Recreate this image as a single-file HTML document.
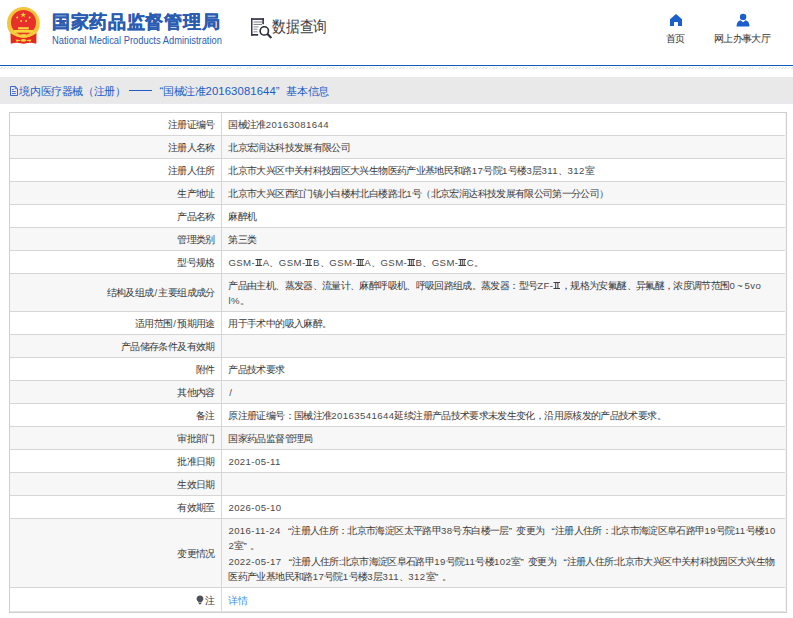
<!DOCTYPE html>
<html><head><meta charset="utf-8">
<style>
html,body{margin:0;padding:0;}
body{width:793px;height:618px;overflow:hidden;background:#fff;position:relative;font-family:"Liberation Sans",sans-serif;color:#333;}
.abs{position:absolute;}
.t1{left:52px;top:9.6px;font-size:17.8px;letter-spacing:0.7px;line-height:24px;font-weight:bold;color:#2a5cb2;-webkit-text-stroke:0.35px #2a5cb2;white-space:nowrap;}
.t2{left:52px;top:35px;font-size:10px;line-height:11px;color:#2c5db2;transform:scaleX(0.935);transform-origin:0 0;white-space:nowrap;}
.q{left:271.5px;top:17px;font-size:16px;line-height:20px;transform:scaleX(0.86);transform-origin:0 0;color:#3c3c44;white-space:nowrap;}
.nav{font-size:10.2px;letter-spacing:-0.64px;line-height:11px;color:#333;white-space:nowrap;}
.bline{left:0;top:65px;width:793px;height:1px;background:#0c5cc3;}
.dash{left:0;top:67px;width:793px;height:2px;background:repeating-linear-gradient(135deg,#fff 0px,#fff 1.17px,#e9e9e9 1.17px,#e9e9e9 2.35px);}
.bar{left:0;top:77px;width:793px;height:26px;background:#e9e9e9;border-bottom:1px solid #e8eaf0;}
.bt{left:19.4px;top:84.5px;font-size:11.3px;letter-spacing:-0.4px;font-weight:500;line-height:13px;color:#1a5cc6;white-space:nowrap;}
.tbl{left:9px;top:112px;width:776px;height:499px;border:1px solid #cfcfcf;}
.r{display:flex;box-sizing:border-box;border-bottom:1px solid #d6d6d6;height:23px;position:relative;}
.r::after{content:'';position:absolute;right:0;top:0;bottom:-1px;width:1px;background:#f3f5fa;}
.r:nth-child(even){background:#f7f7f7;}
.l{box-sizing:border-box;width:212px;border-right:1px solid #d6d6d6;text-align:right;padding-right:6.4px;font-size:10.2px;letter-spacing:-0.64px;line-height:15.2px;display:flex;align-items:center;justify-content:flex-end;white-space:nowrap;color:#3a3a3a;padding-top:1px;}
.v{box-sizing:border-box;width:563px;padding-top:1px;padding-left:6.4px;font-size:10.2px;letter-spacing:-0.64px;line-height:15.2px;display:flex;align-items:center;white-space:nowrap;color:#3a3a3a;}
.fq{display:inline-block;width:10.6px;letter-spacing:0;}
.dg{letter-spacing:0.1px;}
.a{font-size:9.6px;letter-spacing:0.4px;color:#4a4a4a;}
.cl{letter-spacing:-0.8px;}
.sl{margin:0 0.9px;}
.lq,.rq{display:inline-block;width:7.4px;letter-spacing:0;font-size:9.6px;}
.lq{text-align:right;}
.rq{text-align:left;width:6.6px;}
.rn{margin:0;}
.tl{display:inline-block;width:9.36px;text-align:center;letter-spacing:0;font-size:9.6px;}
.lnk{color:#3d8ef3;}
</style></head>
<body>
<!-- emblem -->
<svg class="abs" style="left:4px;top:4px" width="40" height="44" viewBox="4 4 40 44">
  <path d="M10.8 33 L36.2 33 L36 43.4 L31 42.6 L23.5 43.6 L16 42.6 L11 43.4 Z" fill="#e32a1e"/>
  <circle cx="23.4" cy="23.3" r="16.4" fill="#f4c53a"/>
  <path d="M7 23.3 A16.4 16.4 0 0 0 11.5 34.6 L11 43.4 L16 42.6 L23.5 43.6 L31 42.6 L36 43.4 L35.5 34.6 A16.4 16.4 0 0 0 39.8 23.3 Z" fill="none"/>
  <circle cx="23.5" cy="22.4" r="12.5" fill="#e8302a"/>
  <path d="M10.6 33.2 Q17 37.5 23.5 37.6 Q30 37.5 36.4 33.2 L36.3 43.4 L31 42.4 L23.5 43.5 L16 42.4 L10.8 43.4 Z" fill="#e32a1e"/>
  <path d="M11.2 31.8 Q17 37.2 23.5 37.4 Q30 37.2 35.8 31.8" fill="none" stroke="#f6cf3e" stroke-width="1.4"/>
  <polygon fill="#f8d53c" points="23.2,11.9 23.9,13.9 26.1,13.9 24.3,15.2 25,17.3 23.2,16 21.4,17.3 22.1,15.2 20.3,13.9 22.5,13.9"/>
  <circle cx="17.2" cy="17.5" r="1" fill="#f8d53c"/>
  <circle cx="29.6" cy="17.5" r="1" fill="#f8d53c"/>
  <circle cx="21.1" cy="21.1" r="1" fill="#f8d53c"/>
  <circle cx="26.1" cy="21.1" r="1" fill="#f8d53c"/>
  <rect x="18.1" y="27.2" width="10.7" height="2.2" fill="#f8d53c"/>
  <rect x="14" y="30" width="19" height="2.7" fill="#f8d53c"/>
  <ellipse cx="23.5" cy="35.5" rx="3" ry="1.4" fill="#f6cf3e"/>
  <ellipse cx="23.5" cy="40.4" rx="2.6" ry="1.3" fill="#f6d23e"/>
  <path d="M15.5 39.6 L20.5 40 L20.5 40.8 L17.6 41.3 L17.4 43 Z M31.5 39.6 L26.5 40 L26.5 40.8 L29.4 41.3 L29.6 43 Z" fill="#f6d23e"/>
</svg>
<div class="abs t1">国家药品监督管理局</div>
<div class="abs t2">National Medical Products Administration</div>

<!-- data query icon -->
<svg class="abs" style="left:249px;top:16px" width="26" height="24" viewBox="249 16 26 24">
  <rect x="251" y="18.2" width="13" height="1.7" fill="#33334a"/>
  <rect x="251" y="18.2" width="1.5" height="17.5" fill="#3a3a4e"/>
  <rect x="251" y="34" width="7.2" height="1.7" fill="#33334a"/>
  <rect x="262.3" y="18.2" width="1.6" height="6" fill="#33334a"/>
  <rect x="253.5" y="21.5" width="8.5" height="1" fill="#7c7c88"/>
  <rect x="253.5" y="23.9" width="8.5" height="1" fill="#7c7c88"/>
  <rect x="253.5" y="26.4" width="5" height="1" fill="#8a8a95"/>
  <rect x="253.5" y="28.7" width="4" height="1" fill="#8a8a95"/>
  <rect x="253.5" y="31.3" width="4" height="1" fill="#8a8a95"/>
  <circle cx="264.3" cy="30.9" r="4.15" fill="none" stroke="#2a2a3e" stroke-width="1.6"/>
  <path d="M267.4 34 L271.4 37.9" stroke="#2a2a3e" stroke-width="2.1"/>
</svg>
<div class="abs q">数据查询</div>

<!-- nav -->
<svg class="abs" style="left:668px;top:12px" width="16" height="16" viewBox="668 12 16 16">
  <path d="M676 14 L682 19.2 L682 26 L678 26 L678 22 L674 22 L674 26 L670 26 L670 19.2 Z" fill="#1a5fcb"/>
</svg>
<div class="abs nav" style="left:666px;top:33px">首页</div>
<svg class="abs" style="left:735px;top:12px" width="16" height="16" viewBox="735 12 16 16">
  <circle cx="743.1" cy="16.9" r="3.2" fill="#1a5fcb"/>
  <path d="M736.5 26.5 Q736.8 21 740.5 20.2 L743.1 22.2 L745.7 20.2 Q749.4 21 749.5 26.5 Z" fill="#1a5fcb"/>
</svg>
<div class="abs nav" style="left:714px;top:33px">网上办事大厅</div>

<div class="abs bline"></div>
<div class="abs dash"></div>
<div class="abs bar"></div>
<svg class="abs" style="left:9px;top:85px" width="10" height="12" viewBox="9 85 10 12">
  <path d="M10.5 86.5 H15.3 L17.5 88.7 V95.5 H10.5 Z" fill="none" stroke="#3e66cf" stroke-width="1"/>
  <path d="M15.3 86.5 V88.7 H17.5" fill="none" stroke="#3e66cf" stroke-width="0.9"/>
  <path d="M12 89.5 H13.8 M12 91.5 H15.8 M12 93.5 H15.8" stroke="#5a6fd0" stroke-width="1"/>
</svg>
<div class="abs bt">境内医疗器械（注册）</div><div class="abs" style="left:129px;top:90px;width:23px;height:1px;background:#1d5fc1"></div><div class="abs bt" style="left:152.6px"><span class="fq" style="text-align:right">“</span>国械注准<span class="dg">20163081644</span><span class="fq" style="text-align:left">”</span>基本信息</div>

<div class="abs tbl">
<div class="r" style="height:23px"><div class="l">注册证编号</div><div class="v"><div>国械注准<span class="a">20163081644</span></div></div></div>
<div class="r" style="height:23px"><div class="l">注册人名称</div><div class="v"><div>北京宏润达科技发展有限公司</div></div></div>
<div class="r" style="height:23px"><div class="l">注册人住所</div><div class="v"><div>北京市大兴区中关村科技园区大兴生物医药产业基地民和路<span class="a">17</span>号院<span class="a">1</span>号楼<span class="a">3</span>层<span class="a">311</span>、<span class="a">312</span>室</div></div></div>
<div class="r" style="height:23px"><div class="l">生产地址</div><div class="v"><div>北京市大兴区西红门镇小白楼村北白楼路北<span class="a">1</span>号（北京宏润达科技发展有限公司第一分公司）</div></div></div>
<div class="r" style="height:23px"><div class="l">产品名称</div><div class="v"><div>麻醉机</div></div></div>
<div class="r" style="height:23px"><div class="l">管理类别</div><div class="v"><div>第三类</div></div></div>
<div class="r" style="height:23px"><div class="l">型号规格</div><div class="v"><div><span class="a">GSM-</span><svg class="rn" width="7.6" height="7" viewBox="0 0 7.6 7"><path d="M0.5 0.5 H7 M0.5 6.5 H7 M2.7 0.5 V6.5 M4.9 0.5 V6.5" stroke="#3c3c3c" stroke-width="1" fill="none"/></svg><span class="a">A</span>、<span class="a">GSM-</span><svg class="rn" width="7.6" height="7" viewBox="0 0 7.6 7"><path d="M0.5 0.5 H7 M0.5 6.5 H7 M2.7 0.5 V6.5 M4.9 0.5 V6.5" stroke="#3c3c3c" stroke-width="1" fill="none"/></svg><span class="a">B</span>、<span class="a">GSM-</span><svg class="rn" width="8.4" height="7" viewBox="0 0 8.4 7"><path d="M0.5 0.5 H8 M0.5 6.5 H8 M2.4 0.5 V6.5 M4.3 0.5 V6.5 M6.2 0.5 V6.5" stroke="#3c3c3c" stroke-width="1" fill="none"/></svg><span class="a">A</span>、<span class="a">GSM-</span><svg class="rn" width="8.4" height="7" viewBox="0 0 8.4 7"><path d="M0.5 0.5 H8 M0.5 6.5 H8 M2.4 0.5 V6.5 M4.3 0.5 V6.5 M6.2 0.5 V6.5" stroke="#3c3c3c" stroke-width="1" fill="none"/></svg><span class="a">B</span>、<span class="a">GSM-</span><svg class="rn" width="8.4" height="7" viewBox="0 0 8.4 7"><path d="M0.5 0.5 H8 M0.5 6.5 H8 M2.4 0.5 V6.5 M4.3 0.5 V6.5 M6.2 0.5 V6.5" stroke="#3c3c3c" stroke-width="1" fill="none"/></svg><span class="a">C</span>。</div></div></div>
<div class="r" style="height:38px"><div class="l">结构及组成<span class="a"><span class="sl">/</span></span>主要组成成分</div><div class="v"><div>产品由主机、蒸发器、流量计、麻醉呼吸机、呼吸回路组成。蒸发器：型号<span class="a">ZF-</span><svg class="rn" width="7.6" height="7" viewBox="0 0 7.6 7"><path d="M0.5 0.5 H7 M0.5 6.5 H7 M2.7 0.5 V6.5 M4.9 0.5 V6.5" stroke="#3c3c3c" stroke-width="1" fill="none"/></svg>，规格为安氟醚、异氟醚，浓度调节范围<span class="a">0</span><span class="tl">~</span><span class="a">5vo</span><br><span class="a">l%</span>。</div></div></div>
<div class="r" style="height:23px"><div class="l">适用范围<span class="a"><span class="sl">/</span></span>预期用途</div><div class="v"><div>用于手术中的吸入麻醉。</div></div></div>
<div class="r" style="height:23px"><div class="l">产品储存条件及有效期</div><div class="v"><div></div></div></div>
<div class="r" style="height:23px"><div class="l">附件</div><div class="v"><div>产品技术要求</div></div></div>
<div class="r" style="height:23px"><div class="l">其他内容</div><div class="v"><div><span class="a"><span class="sl">/</span></span></div></div></div>
<div class="r" style="height:23px"><div class="l">备注</div><div class="v"><div>原注册证编号：国械注准<span class="a">20163541644</span>延续注册产品技术要求未发生变化，沿用原核发的产品技术要求。</div></div></div>
<div class="r" style="height:23px"><div class="l">审批部门</div><div class="v"><div>国家药品监督管理局</div></div></div>
<div class="r" style="height:23px"><div class="l">批准日期</div><div class="v"><div><span class="a">2021-05-11</span></div></div></div>
<div class="r" style="height:23px"><div class="l">生效日期</div><div class="v"><div></div></div></div>
<div class="r" style="height:23px"><div class="l">有效期至</div><div class="v"><div><span class="a">2026-05-10</span></div></div></div>
<div class="r" style="height:69px"><div class="l">变更情况</div><div class="v"><div><span class="a">2016-11-24 </span><span class="lq">“</span>注册人住所：北京市海淀区太平路甲<span class="a">38</span>号东白楼一层<span class="rq" style="width:7.6px">”</span>变更为<span class="a"> </span><span class="lq">“</span>注册人住所：北京市海淀区阜石路甲<span class="a">19</span>号院<span class="a">11</span>号楼<span class="a">10</span><br><span class="a">2</span>室<span class="rq">”</span>。<br><span class="a">2022-05-17 </span><span class="lq">“</span>注册人住所<span class="a"><span class="cl">:</span></span>北京市海淀区阜石路甲<span class="a">19</span>号院<span class="a">11</span>号楼<span class="a">102</span>室<span class="rq" style="width:7.6px">”</span>变更为<span class="a"> </span><span class="lq">“</span>注册人住所<span class="a"><span class="cl">:</span></span>北京市大兴区中关村科技园区大兴生物<br>医药产业基地民和路<span class="a">17</span>号院<span class="a">1</span>号楼<span class="a">3</span>层<span class="a">311</span>、<span class="a">312</span>室<span class="rq">”</span>。</div></div></div>
<div class="r" style="height:24px;border-bottom-color:#e4e4e8"><div class="l" style="padding-top:2px"><svg width="8" height="10" viewBox="0 0 8 10" style="margin-right:1.6px;position:relative;top:-0.5px"><path d="M4 0.5 C1.9 0.5 0.6 2 0.6 3.7 C0.6 5 1.4 5.8 2.1 6.6 L2.3 7.6 L5.7 7.6 L5.9 6.6 C6.6 5.8 7.4 5 7.4 3.7 C7.4 2 6.1 0.5 4 0.5 Z M2.6 8.1 H5.4 L5 9.2 H3 Z" fill="#505058"/></svg>注</div><div class="v lnk" style="padding-top:2px"><div>详情</div></div></div>
</div>
</body></html>
